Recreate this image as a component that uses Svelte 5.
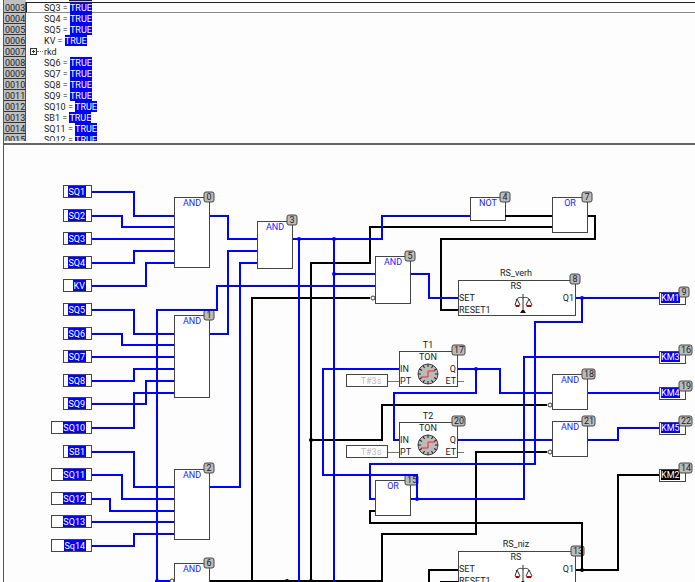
<script>
  // watch list in the upper pane
  const rows = [
    { line: '0003', name: 'SQ3', value: 'TRUE', active: true },
    { line: '0004', name: 'SQ4', value: 'TRUE' },
    { line: '0005', name: 'SQ5', value: 'TRUE' },
    { line: '0006', name: 'KV', value: 'TRUE' },
    { line: '0007', name: 'rkd', group: true },
    { line: '0008', name: 'SQ6', value: 'TRUE' },
    { line: '0009', name: 'SQ7', value: 'TRUE' },
    { line: '0010', name: 'SQ8', value: 'TRUE' },
    { line: '0011', name: 'SQ9', value: 'TRUE' },
    { line: '0012', name: 'SQ10', value: 'TRUE' },
    { line: '0013', name: 'SB1', value: 'TRUE' },
    { line: '0014', name: 'SQ11', value: 'TRUE' },
    { line: '0015', name: 'SQ12', value: 'TRUE' }
  ];

  // y is the height of the wire, w the width of the coloured label
  const inputs = [
    { name: 'SQ1', y: 192, w: 18 },
    { name: 'SQ2', y: 216, w: 18 },
    { name: 'SQ3', y: 239, w: 18 },
    { name: 'SQ4', y: 263, w: 18 },
    { name: 'KV', y: 286, w: 13 },
    { name: 'SQ5', y: 310, w: 18 },
    { name: 'SQ6', y: 334, w: 18 },
    { name: 'SQ7', y: 357, w: 18 },
    { name: 'SQ8', y: 381, w: 18 },
    { name: 'SQ9', y: 404, w: 18 },
    { name: 'SQ10', y: 428, w: 23, wide: true },
    { name: 'SB1', y: 452, w: 18 },
    { name: 'SQ11', y: 475, w: 23, wide: true },
    { name: 'SQ12', y: 499, w: 23, wide: true },
    { name: 'SQ13', y: 522, w: 23, wide: true },
    { name: 'Sq14', y: 546, w: 22, wide: true }
  ];

  const outputs = [
    { name: 'KM1', y: 298, on: true },
    { name: 'KM3', y: 357, on: true },
    { name: 'KM4', y: 393, on: true },
    { name: 'KM5', y: 428, on: true },
    { name: 'KM2', y: 475, on: false }
  ];

  const gates = [
    { type: 'AND', x: 174, y: 197, h: 70 },
    { type: 'AND', x: 174, y: 315, h: 82 },
    { type: 'AND', x: 174, y: 469, h: 70 },
    { type: 'AND', x: 257, y: 221, h: 47 },
    { type: 'NOT', x: 470, y: 197, h: 23 },
    { type: 'AND', x: 375, y: 256, h: 47 },
    { type: 'AND', x: 174, y: 563, h: 47 },
    { type: 'OR', x: 552, y: 197, h: 35 },
    { type: 'OR', x: 375, y: 480, h: 35 },
    { type: 'AND', x: 552, y: 374, h: 35 },
    { type: 'AND', x: 552, y: 421, h: 35 }
  ];

  const latches = [
    { name: 'RS_verh', y: 280 },
    { name: 'RS_niz', y: 551 }
  ];

  const timers = [
    { name: 'T1', y: 351 },
    { name: 'T2', y: 422 }
  ];

  // order of execution
  const badges = [
    { n: 0, x: 204, y: 192 },
    { n: 1, x: 204, y: 310 },
    { n: 2, x: 204, y: 463 },
    { n: 3, x: 287, y: 215 },
    { n: 4, x: 500, y: 192 },
    { n: 5, x: 405, y: 251 },
    { n: 6, x: 204, y: 558 },
    { n: 7, x: 582, y: 192 },
    { n: 8, x: 570, y: 274 },
    { n: 9, x: 679, y: 287 },
    { n: 13, x: 571, y: 546 },
    { n: 14, x: 679, y: 463 },
    { n: 15, x: 405, y: 475 },
    { n: 16, x: 679, y: 345 },
    { n: 17, x: 452, y: 345 },
    { n: 18, x: 582, y: 369 },
    { n: 19, x: 679, y: 381 },
    { n: 20, x: 452, y: 416 },
    { n: 21, x: 582, y: 416 },
    { n: 22, x: 679, y: 416 }
  ];

  const offWires = [
    'M552 227H370V263H311V582',
    'M370 298H252V582',
    'M311 440H382V405H547',
    'M505 216H552',
    'M588 216H595V239H441V310H458',
    'M547 452H476V534H382V581H210',
    'M576 570H618V475H659',
    'M582 570V523H370V511H375',
    'M458 570H429V590',
    'M458 582H441V590'
  ];

  const onWires = [
    'M92 192H134V216H174',
    'M92 216H122V227H174',
    'M92 239H174',
    'M92 263H134V251H174',
    'M92 286H146V263H174',
    'M92 310H134V334H174',
    'M92 334H122V345H174',
    'M92 357H174',
    'M92 381H134V369H174',
    'M92 404H146V381H174',
    'M92 428H134V393H174',
    'M92 452H134V487H174',
    'M92 475H122V499H174',
    'M92 499H110V511H174',
    'M92 522H174',
    'M92 546H134V534H174',
    'M210 216H228V239H257',
    'M210 334H228V251H257',
    'M210 487H240V263H257',
    'M375 286H217V310H157V581H170',
    'M293 239H382V216H470',
    'M299 239V590',
    'M334 239V590',
    'M334 274H375',
    'M411 274H429V298H458',
    'M576 298H659',
    'M582 298V322H535V464H370V499H375',
    'M411 499H524V357H659',
    'M417 499V475H323V369H399',
    'M458 369H500V393H552',
    'M476 369V393H394V440H399',
    'M458 440H552',
    'M588 393H659',
    'M588 440H618V428H659'
  ];

  const offDots = [[311, 440], [287, 581], [311, 581], [582, 570]];
  const onDots = [[299, 239], [334, 239], [334, 274], [582, 298], [476, 369], [417, 499], [157, 581]];
  const inverters = [[373, 298], [550, 405], [550, 452], [172, 581]];

  const ticks = [0, 30, 60, 90, 120, 150, 180, 210, 240, 270, 300, 330];
</script>

<main>
  <section class="watch" aria-label="Variables">
    <div class="above">
      <span class="above-line"></span>
      <span class="above-value"></span>
    </div>
    <ol>
      {#each rows as row}
        <li class:active={row.active}>
          <span class="line">{row.line}</span>
          <span class="entry">
            {#if row.group}
              <button type="button" aria-label="Expand rkd"></button>
              <span class="branch"></span>
              <span>{row.name}</span>
            {:else}
              <span class="indent"></span>
              <span>{row.name} =&nbsp;</span><span class="value">{row.value}</span>
            {/if}
          </span>
        </li>
      {/each}
    </ol>
  </section>

  <section class="chart" aria-label="Function chart">
    <svg width="100%" height="437">
      <g transform="translate(-4 -145)">
        {#each inputs as input}
          <rect class="box" x={input.wide ? 51 : 63} y={input.y - 7} width={input.wide ? 40 : 28} height="12" />
          <rect class="on" x={86 - input.w} y={input.y - 6} width={input.w} height="11" />
          <text class="light" x="85" y={input.y + 3} text-anchor="end">{input.name}</text>
        {/each}

        {#each outputs as output}
          <rect class="box" x="659" y={output.y - 6} width="26" height="12" />
          <rect class={output.on ? 'on' : 'off'} x="661" y={output.y - 5} width="19" height="10" />
          <text class="light" x="661" y={output.y + 3}>{output.name}</text>
        {/each}

        {#each gates as gate}
          <rect class="box" x={gate.x} y={gate.y} width="35" height={gate.h} />
          <text class="gate" x={gate.x + 18} y={gate.y + 9} text-anchor="middle">{gate.type}</text>
        {/each}

        {#each latches as latch}
          <g transform="translate(458 {latch.y})">
            <rect class="box" width="117" height="35" />
            <text x="58" y="-4" text-anchor="middle">{latch.name}</text>
            <text x="58" y="9" text-anchor="middle">RS</text>
            <text x="1" y="21">SET</text>
            <text x="1" y="33">RESET1</text>
            <text x="116" y="21" text-anchor="end">Q1</text>
            <!-- scales -->
            <path class="scale" d="M65 14V31M58 20C60 17 63 17 65 18C67 17 70 17 72 20M59 19L57 25M59 19L62 25M71 19L68 25M71 19L74 25" />
            <path class="pan" d="M57 25H62L61 27H58ZM68 25H74L73 27H69Z" />
            <path class="foot" d="M62 33L64 30H66L68 33Z" />
          </g>
        {/each}

        {#each timers as timer}
          <g transform="translate(399 {timer.y})">
            <path class="thin" d="M-12 30H0M58 30H65" />
            <rect class="box" width="58" height="35" />
            <rect class="box" x="-53" y="23" width="41" height="12" />
            <text class="muted" x="-28" y="33" text-anchor="middle">T#3s</text>
            <text x="29" y="-3" text-anchor="middle">{timer.name}</text>
            <text x="29" y="9" text-anchor="middle">TON</text>
            <text x="1" y="21">IN</text>
            <text x="1" y="33">PT</text>
            <text x="57" y="21" text-anchor="end">Q</text>
            <text x="57" y="33" text-anchor="end">ET</text>
            <circle class="dial" cx="29" cy="23" r="10" />
            {#each ticks as angle}
              <path class="tick" d="M29 13V16" transform="rotate({angle} 29 23)" />
            {/each}
            <path class="step" d="M22 26H29V20H36" />
          </g>
        {/each}

        {#each badges as badge}
          <rect class="badge" x={badge.x} y={badge.y} width={badge.n > 9 ? 13 : 10} height="10" rx="2" />
          <text x={badge.x + (badge.n > 9 ? 7 : 5)} y={badge.y + 8} text-anchor="middle">{badge.n}</text>
        {/each}

        <path class="wire-off" d={offWires.join('')} />
        <path class="wire-on" d={onWires.join('')} />

        {#each offDots as [x, y]}
          <circle class="off" cx={x} cy={y} r="2" />
        {/each}
        {#each onDots as [x, y]}
          <circle class="on" cx={x} cy={y} r="2" />
        {/each}
        {#each inverters as [x, y]}
          <circle class="inverter" cx={x} cy={y} r="2" />
        {/each}
      </g>
    </svg>
  </section>
</main>

<style>
  :global(body) {
    margin: 0;
    background: #fdfdfd;
  }

  main {
    margin-left: 3px;
    border-left: 1px solid #555;
    font-family: Roboto, Arial, sans-serif;
    font-size: 9px;
    color: #222;
  }

  .watch {
    height: 141px;
    overflow: hidden;
  }

  /* lower edge of the row scrolled out of view */
  .above {
    display: flex;
    height: 2px;
  }

  .above-line {
    width: 22px;
    margin-right: 43px;
    background: #c0c0c0;
  }

  .above-value {
    box-sizing: border-box;
    width: 23px;
    border-bottom: 1px solid #dd4;
    background: #00f;
  }

  ol {
    margin: 0;
    padding: 0;
    list-style: none;
  }

  li {
    display: flex;
    height: 11px;
    line-height: 13px;
    overflow: hidden;
  }

  .line {
    box-sizing: border-box;
    width: 22px;
    padding-left: 1px;
    border-right: 1px solid #555;
    border-bottom: 1px solid #333;
    background: #c0c0c0;
    white-space: nowrap;
  }

  .entry {
    display: flex;
    flex: 1;
    box-sizing: border-box;
    align-items: flex-start;
    padding-left: 4px;
  }

  .active .entry {
    padding-left: 3px;
    border: 1px solid #222;
    border-right: none;
    border-bottom-color: #888;
    line-height: 11px;
  }

  .indent {
    width: 14px;
  }

  .value {
    background: #00f;
    color: #fff;
  }

  button {
    box-sizing: border-box;
    align-self: center;
    width: 7px;
    height: 7px;
    padding: 0;
    border: 1px solid #333;
    border-radius: 0;
    background:
      linear-gradient(#333, #333) center / 3px 1px no-repeat,
      linear-gradient(#333, #333) center / 1px 3px no-repeat,
      #fff;
  }

  .branch {
    align-self: center;
    width: 6px;
    margin-right: 1px;
    border-top: 1px dotted #777;
  }

  .chart {
    margin-top: 2px;
    border-top: 2px solid #666;
    overflow: hidden;
  }

  svg {
    display: block;
  }

  text {
    fill: #222;
  }

  .box {
    fill: #fff;
    stroke: #444;
    shape-rendering: crispEdges;
  }

  .on {
    fill: #00f;
  }

  .off {
    fill: #000;
  }

  .light {
    fill: #fff;
  }

  .gate {
    fill: #22f;
  }

  .muted {
    fill: #bbb;
  }

  .badge {
    fill: #bbb;
    stroke: #444;
  }

  .wire-on,
  .wire-off {
    fill: none;
    stroke-width: 2px;
    shape-rendering: crispEdges;
  }

  .wire-on {
    stroke: #00f;
  }

  .wire-off {
    stroke: #000;
  }

  .inverter {
    fill: #fff;
    stroke: #333;
  }

  .thin {
    stroke: #777;
    shape-rendering: crispEdges;
  }

  .scale {
    fill: none;
    stroke: #333;
  }

  .pan {
    fill: #a00;
  }

  .foot {
    fill: #111;
  }

  .dial {
    fill: #bbb;
    stroke: #444;
  }

  .tick {
    stroke: #222;
  }

  .step {
    fill: none;
    stroke: #f22;
  }
</style>
